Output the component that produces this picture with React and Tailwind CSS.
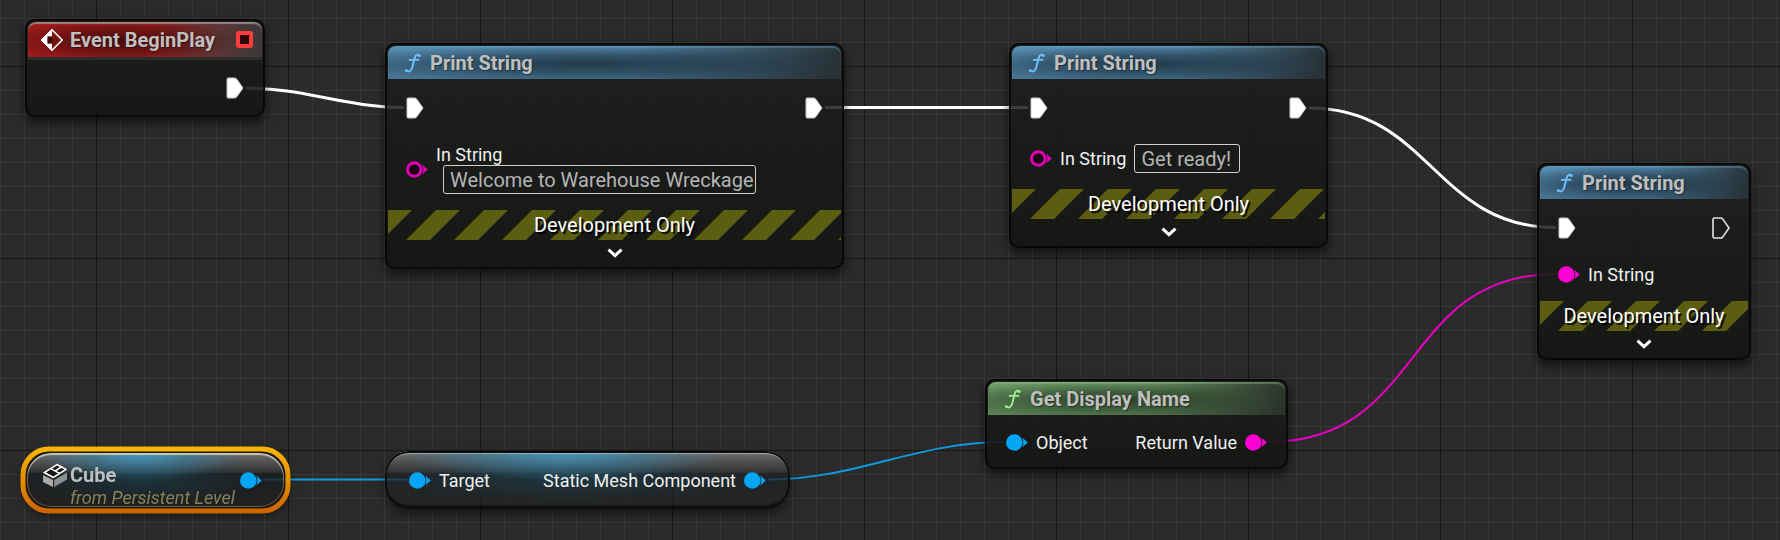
import React from "react";

const nodeShell =
  "absolute flex flex-col rounded-[10px] p-[3px] bg-[linear-gradient(180deg,rgba(30,31,30,0.82)_0%,rgba(24,26,23,0.86)_40%,rgba(20,22,19,0.92)_100%)] shadow-[inset_0_0_0_2px_rgba(6,6,6,0.85),0_5px_9px_1px_rgba(0,0,0,0.5)]";

const headerTones = {
  red: "bg-[radial-gradient(ellipse_50%_60%_at_40%_54%,rgba(50,8,8,0.8)_0%,rgba(60,10,10,0.5)_50%,transparent_100%),linear-gradient(90deg,#9c1a1b_0%,#9a1d1e_52%,rgba(110,58,58,0.8)_80%,rgba(68,66,66,0.75)_100%)] shadow-[inset_0_2px_1px_rgba(170,160,160,0.75)]",
  blue: "bg-[radial-gradient(ellipse_60%_56%_at_44%_54%,rgba(30,50,64,0.9)_0%,rgba(32,54,70,0.6)_50%,transparent_100%),linear-gradient(100deg,transparent_52%,rgba(36,43,46,0.5)_76%,rgba(36,42,44,0.9)_98%),linear-gradient(180deg,#568cb0_0%,#467493_100%)] shadow-[inset_0_2px_1px_rgba(95,155,195,0.45)]",
  green: "bg-[radial-gradient(ellipse_60%_56%_at_44%_54%,rgba(40,58,38,0.9)_0%,rgba(44,66,42,0.6)_50%,transparent_100%),linear-gradient(100deg,transparent_52%,rgba(38,44,38,0.5)_76%,rgba(38,42,38,0.9)_98%),linear-gradient(180deg,#6c9b66_0%,#587f54_100%)] shadow-[inset_0_2px_1px_rgba(140,190,130,0.45)]",
};

function ExecPin({ hollow = false }) {
  return (
    <svg className="h-[22px] w-[18px] shrink-0" viewBox="0 0 18 22" aria-hidden="true">
      <path
        d="M1 2.2Q1 1 2.2 1H8.6Q9.8 1 10.6 1.9L17 11L10.6 20.1Q9.8 21 8.6 21H2.2Q1 21 1 19.8Z"
        fill={hollow ? "none" : "#ffffff"}
        stroke={hollow ? "#e2e2e2" : "#c8c8c8"}
        strokeWidth={hollow ? 1.6 : 1}
      />
    </svg>
  );
}

function DataPin({ color, hollow = false }) {
  return (
    <svg className="h-[17px] w-[22px] shrink-0" viewBox="0 0 22 17" aria-hidden="true">
      {hollow ? (
        <circle cx="8.3" cy="8.5" r="6.8" fill="#180414" stroke={color} strokeWidth="2.9" />
      ) : (
        <circle cx="8.3" cy="8.5" r="8.3" fill={color} />
      )}
      <path d="M16.2 3.4L21.8 8.5L16.2 13.6Q18.4 8.5 16.2 3.4Z" fill={color} />
    </svg>
  );
}

function FunctionGlyph({ color }) {
  return (
    <svg className="h-5 w-[18px] shrink-0" viewBox="0 0 18 20" fill="none" stroke={color} strokeLinecap="round" aria-hidden="true">
      <path d="M15.4 2.4C13.8 1 11.6 1.5 10.8 4.6L8.2 14.6C7.4 17.8 5 19.4 2.2 17.8" strokeWidth="1.9" />
      <path d="M5.6 6.9H14.6" strokeWidth="1.7" />
      <circle cx="15.1" cy="2.8" r="0.9" fill={color} />
      <circle cx="2.3" cy="17.5" r="0.9" fill={color} />
    </svg>
  );
}

function EventGlyph() {
  return (
    <svg className="h-6 w-6 shrink-0" viewBox="0 0 24 24" aria-hidden="true">
      <path d="M12 1.8L22.2 12L12 22.2L1.8 12Z" fill="none" stroke="#fff" strokeWidth="1.5" />
      <path d="M12 1V8.6H7.6V15.4H12V23L1 12Z" fill="#fff" />
      <path d="M7.6 8.6H12V15.4H7.6Z" fill="#3a0808" />
    </svg>
  );
}

function MeshGlyph() {
  return (
    <svg className="h-6 w-[26px] shrink-0" viewBox="0 0 26 24" aria-hidden="true">
      <path d="M1 12L11 17V24L1 19Z" fill="#a9a9a9" />
      <path d="M12.2 17L25 9.4V16.6L12.2 24Z" fill="#8f8f8f" />
      <path d="M15 1.6L24 6.4L11.4 14.4L2.2 9.6Z" fill="#161616" stroke="#fff" strokeWidth="1.7" strokeLinejoin="round" />
      <path d="M8.6 5.6L17.6 10.4M13 8L19.4 4" stroke="#fff" strokeWidth="1.5" />
    </svg>
  );
}

function NodeTitle({ tone, glyph, title }) {
  return (
    <header className={`flex h-[33px] shrink-0 items-center gap-2 rounded-t-lg pl-4 ${headerTones[tone]}`}>
      {glyph}
      <h2 className="text-xl leading-6 font-bold text-[#bfbfbf] [text-shadow:1px_1px_1px_rgba(0,0,0,0.4)]">{title}</h2>
    </header>
  );
}

function DevelopmentFooter({ id }) {
  return (
    <>
      <div className="relative mt-4 flex h-[30px] items-center justify-center">
        <svg className="absolute inset-0 h-full w-full" aria-hidden="true">
          <defs>
            <pattern id={id} width="48" height="30" patternUnits="userSpaceOnUse">
              <path d="M0 0H24L-6 30H-30ZM48 0H72L42 30H18Z" fill="#5b5e11" />
            </pattern>
          </defs>
          <rect width="100%" height="100%" fill={`url(#${id})`} />
        </svg>
        <span className="relative text-xl leading-6 text-white [text-shadow:2px_2px_1px_#000]">Development Only</span>
      </div>
      <button type="button" aria-label="Show advanced pins" className="flex h-[26px] w-full items-center justify-center">
        <svg className="h-[10px] w-4" viewBox="0 0 16 10" fill="none" stroke="#fff" strokeWidth="3" aria-hidden="true">
          <path d="M1.5 1.6L8 7.6L14.5 1.6" />
        </svg>
      </button>
    </>
  );
}

const labelText = "text-lg leading-[21px] text-[#f0f0f0]";
const fieldBox =
  "h-[29px] rounded-[3px] border border-[#d0d0d0] bg-transparent pl-[6px] text-xl leading-6 text-[#b4b4b4] outline-none";

function PrintNode({ id, place, outConnected = true, children }) {
  return (
    <section className={`${nodeShell} ${place}`}>
      <NodeTitle tone="blue" glyph={<FunctionGlyph color="#74c2ff" />} title="Print String" />
      <div className="mt-[17px] flex h-6 items-center justify-between pr-[18px] pl-[18px]">
        <ExecPin />
        <ExecPin hollow={!outConnected} />
      </div>
      <div className="mt-6 flex items-center gap-2 pl-[18px]">{children}</div>
      <DevelopmentFooter id={id} />
    </section>
  );
}

function Wires() {
  return (
    <svg className="pointer-events-none absolute inset-0 h-full w-full" fill="none" aria-hidden="true">
      <g stroke="#fff" strokeWidth="3">
        <path d="M246 88C304 88 346 107.5 404 107.5" />
        <path d="M825 107.5H1028" />
        <path d="M1309 108C1430 108 1435 227.5 1556 227.5" />
      </g>
      <g strokeWidth="2">
        <path d="M1268 442C1425 442 1400 274 1556 274" stroke="#e800c0" />
        <path d="M263 479.5H407" stroke="#0e9ae0" />
        <path d="M768 479.5C856 479.5 916 442 1004 442" stroke="#0e9ae0" />
      </g>
    </svg>
  );
}

const pillFace =
  "rounded-[24px] bg-[radial-gradient(ellipse_40%_52%_at_44%_0%,rgba(66,158,200,0.9)_0%,rgba(56,130,165,0.6)_50%,transparent_100%),radial-gradient(ellipse_46%_36%_at_45%_50%,rgba(24,66,80,0.6)_0%,transparent_100%),linear-gradient(180deg,rgba(125,125,125,0.85)_0%,rgba(50,52,53,0.8)_37%,rgba(28,32,34,0.7)_38%,rgba(32,34,35,0.7)_68%,rgba(34,34,34,0.75)_100%)]";

export default function App() {
  return (
    <main className="relative min-h-screen w-full overflow-hidden bg-[#2a2a2a] font-['Roboto',sans-serif]">
      <svg className="absolute inset-0 h-full w-full" aria-hidden="true">
        <defs>
          <pattern id="minor-grid" width="24" height="24" y="18" patternUnits="userSpaceOnUse">
            <path d="M0 0.5H24M0.5 0V24" stroke="#383838" fill="none" />
          </pattern>
          <pattern id="major-grid" width="192" height="192" x="96" y="66" patternUnits="userSpaceOnUse">
            <path d="M0 0.5H192M0.5 0V192" stroke="#161616" fill="none" />
          </pattern>
        </defs>
        <rect width="100%" height="100%" fill="url(#minor-grid)" />
        <rect width="100%" height="100%" fill="url(#major-grid)" />
      </svg>
      <Wires />

      <section className={`${nodeShell} top-[19px] left-[25px] h-[98px] w-[240px]`}>
        <header className={`flex h-[35px] shrink-0 items-center gap-[6px] rounded-t-lg pr-[9px] pl-3 ${headerTones.red}`}>
          <EventGlyph />
          <h2 className="text-xl leading-6 font-bold text-[#bfbfbf] [text-shadow:1px_1px_1px_rgba(0,0,0,0.4)]">Event BeginPlay</h2>
          <button type="button" aria-label="Output delegate" className="ml-auto size-[17px] rounded-[3px] border-4 border-[#ff3b3b] bg-[#2c0606]" />
        </header>
        <div className="h-[3px] bg-[#2c2d2c]" />
        <div className="mt-[17px] flex justify-end pr-[18px]">
          <ExecPin />
        </div>
      </section>

      <PrintNode id="hazard-1" place="top-[43px] left-[385px] w-[459px]">
        <DataPin color="#e400b8" hollow />
        <div className="flex flex-col">
          <label htmlFor="welcome-text" className={labelText}>In String</label>
          <input id="welcome-text" defaultValue="Welcome to Warehouse Wreckage" className={`ml-[7px] w-[313px] ${fieldBox}`} />
        </div>
      </PrintNode>

      <PrintNode id="hazard-2" place="top-[43px] left-[1009px] w-[319px]">
        <DataPin color="#e400b8" hollow />
        <label htmlFor="ready-text" className={labelText}>In String</label>
        <input id="ready-text" defaultValue="Get ready!" className={`w-[106px] ${fieldBox}`} />
      </PrintNode>

      <PrintNode id="hazard-3" place="top-[163px] left-[1537px] w-[214px]" outConnected={false}>
        <DataPin color="#ff00d2" />
        <span className={labelText}>In String</span>
      </PrintNode>

      <section className={`${nodeShell} top-[379px] left-[985px] h-[90px] w-[303px]`}>
        <NodeTitle tone="green" glyph={<FunctionGlyph color="#9df08f" />} title="Get Display Name" />
        <div className="mt-[17px] flex h-[21px] items-center justify-between px-[18px]">
          <span className="flex items-center gap-2">
            <DataPin color="#05a5f3" />
            <span className={labelText}>Object</span>
          </span>
          <span className="flex items-center gap-2">
            <span className={labelText}>Return Value</span>
            <DataPin color="#ff00d2" />
          </span>
        </div>
      </section>

      <section className="absolute top-[446px] left-[20px] flex h-[68px] w-[271px] p-[7px] drop-shadow-[0_3px_3px_rgba(0,0,0,0.4)]">
        <svg className="absolute inset-0 h-full w-full" fill="none" aria-hidden="true">
          <defs>
            <linearGradient id="selection" x1="0" y1="0" x2="0" y2="1">
              <stop offset="0" stopColor="#f8b400" />
              <stop offset="1" stopColor="#cf6500" />
            </linearGradient>
          </defs>
          <rect x="3" y="3" width="265" height="62" rx="26" stroke="url(#selection)" strokeWidth="5" />
        </svg>
        <div className={`flex w-full items-center justify-between pr-[22px] pl-[15px] ${pillFace} shadow-[inset_0_2px_1px_rgba(230,225,205,0.75),inset_0_0_0_1px_rgba(190,150,90,0.5),0_0_0_1px_#1c1206]`}>
          <div className="grid grid-cols-[26px_auto] items-center gap-x-[2px] pt-3">
            <MeshGlyph />
            <h2 className="text-xl leading-[22px] font-bold text-[#bfbfbf]">Cube</h2>
            <p className="col-start-2 text-lg leading-[22px] whitespace-nowrap text-[#85835f] italic">from Persistent Level</p>
          </div>
          <DataPin color="#05a5f3" />
        </div>
      </section>

      <section className={`absolute top-[451px] left-[385px] flex h-[58px] w-[405px] items-center justify-between pr-6 pl-6 ${pillFace} shadow-[inset_0_0_0_2px_#0c0c0c,inset_0_3px_1px_rgba(190,200,205,0.7),inset_0_-4px_1px_rgba(10,10,10,0.6),0_5px_8px_rgba(0,0,0,0.45)]`}>
        <span className="flex items-center gap-2">
          <DataPin color="#05a5f3" />
          <span className={labelText}>Target</span>
        </span>
        <span className="flex items-center gap-2">
          <span className={labelText}>Static Mesh Component</span>
          <DataPin color="#05a5f3" />
        </span>
      </section>
    </main>
  );
}
